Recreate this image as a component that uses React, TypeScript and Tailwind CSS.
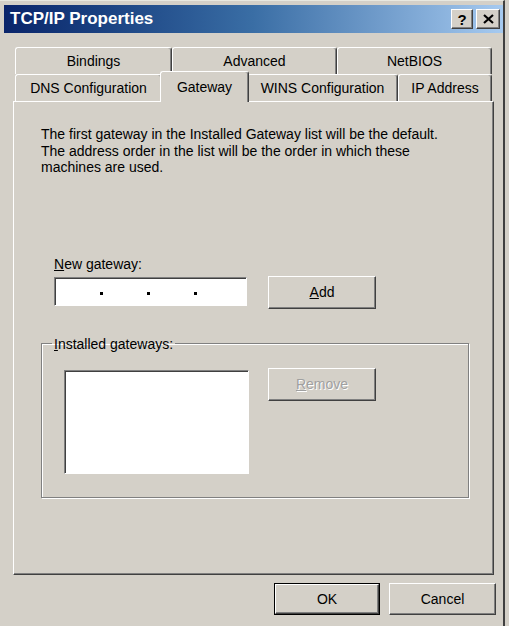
import type { ReactNode } from 'react';

const raised =
  'border border-t-white border-l-white border-r-[#404040] border-b-[#404040] shadow-[inset_-1px_-1px_#808080]';

function Tab({ label, selected, className = '' }: { label: string; selected?: boolean; className?: string }) {
  return (
    <div
      className={`flex items-center justify-center rounded-t-[3px] border border-b-0 border-t-white border-l-white border-r-[#404040] shadow-[inset_-1px_0_#808080] bg-[#d4d0c8] pt-px ${
        selected ? 'relative z-10 -mx-[2px] -mt-[3px] h-[31px] -mb-px' : 'h-[27px]'
      } ${className}`}
    >
      {label}
    </div>
  );
}

function Button({ children, disabled, isDefault, className = '' }: { children: ReactNode; disabled?: boolean; isDefault?: boolean; className?: string }) {
  const inner = (
    <div
      className={`flex h-full w-full items-center justify-center bg-[#d4d0c8] ${raised} ${
        disabled ? 'text-[#a0a0a0] [text-shadow:1px_1px_#ffffff]' : 'text-black'
      }`}
    >
      {children}
    </div>
  );
  return isDefault ? <div className={`border border-black ${className}`}>{inner}</div> : <div className={className}>{inner}</div>;
}

export default function App() {
  return (
    <div
      className="h-[626px] w-[509px] bg-[#d4d0c8] text-[14px] text-black"
      style={{ fontFamily: '"Liberation Sans", Arial, sans-serif' }}
    >
      <div className="flex h-full w-[505px] flex-col border-r-2 border-r-[#404040] border-t border-t-[#e8e8e0] pl-[4px] pt-[4px]">
        {/* title bar */}
        <div className="flex h-[28px] w-[499px] items-center justify-between bg-gradient-to-r from-[#0a246a] via-[#3a6ea5] to-[#a6caf0] pl-[6px] pr-[3px]">
          <span className="text-[17px] font-bold text-white">TCP/IP Properties</span>
          <div className="flex gap-[3px]">
            <div className={`flex h-[20px] w-[22px] items-center justify-center bg-[#d4d0c8] text-[15px] font-bold leading-none ${raised}`}>?</div>
            <div className={`flex h-[20px] w-[24px] items-center justify-center bg-[#d4d0c8] ${raised}`}>
              <svg width="11" height="10" viewBox="0 0 11 10">
                <path d="M1 1 L10 9 M10 1 L1 9" stroke="black" strokeWidth="2.2" />
              </svg>
            </div>
          </div>
        </div>

        {/* tabs */}
        <div className="ml-[9px] mt-[14px] w-[481px]">
          <div className="ml-[2px] flex w-[477px]">
            <Tab label="Bindings" className="w-[157px]" />
            <Tab label="Advanced" className="w-[165px]" />
            <Tab label="NetBIOS" className="w-[155px]" />
          </div>
          <div className="ml-[2px] flex w-[477px]">
            <Tab label="DNS Configuration" className="w-[147px]" />
            <Tab label="Gateway" selected className="w-[89px]" />
            <Tab label="WINS Configuration" className="w-[151px]" />
            <Tab label="IP Address" className="w-[94px]" />
          </div>

          {/* panel */}
          <div className="flex h-[474px] flex-col border border-t-white border-l-white border-r-[#404040] border-b-[#404040] shadow-[inset_-1px_-1px_#808080] pl-[27px]">
            <p className="mt-[24px] leading-[16.5px]">
              The first gateway in the Installed Gateway list will be the default.
              <br />
              The address order in the list will be the order in which these
              <br />
              machines are used.
            </p>

            <div className="ml-[13px] mt-[78px]">
              <u>N</u>ew gateway:
            </div>
            <div className="ml-[13px] mt-[1px] flex items-start gap-[21px]">
              <div className="mt-px flex h-[29px] w-[193px] items-center gap-[44px] border border-t-[#808080] border-l-[#808080] border-b-white border-r-white bg-white pl-[45px] pt-[4px] shadow-[inset_1px_1px_#404040]">
                <span className="h-[3px] w-[3px] bg-black" />
                <span className="h-[3px] w-[3px] bg-black" />
                <span className="h-[3px] w-[3px] bg-black" />
              </div>
              <Button className="h-[33px] w-[108px]">
                <u>A</u>dd
              </Button>
            </div>

            <fieldset className="mt-[27px] h-[162px] w-[428px] border border-[#808080] shadow-[1px_1px_#ffffff,inset_1px_1px_#ffffff]">
              <legend className="ml-[10px] px-[2px] leading-[16px]">
                <u>I</u>nstalled gateways:
              </legend>
              <div className="mt-[16px] flex items-start gap-[19px] pl-[22px]">
                <div className="mt-[2px] h-[104px] w-[185px] border border-t-[#808080] border-l-[#808080] border-b-white border-r-white bg-white shadow-[inset_1px_1px_#404040]" />
                <Button disabled className="h-[33px] w-[108px]">
                  <u>R</u>emove
                </Button>
              </div>
            </fieldset>
          </div>
        </div>

        {/* dialog buttons */}
        <div className="mt-[8px] flex w-[492px] justify-end gap-[9px]">
          <Button isDefault className="h-[32px] w-[106px]">
            OK
          </Button>
          <Button className="h-[32px] w-[107px]">Cancel</Button>
        </div>
      </div>
    </div>
  );
}
